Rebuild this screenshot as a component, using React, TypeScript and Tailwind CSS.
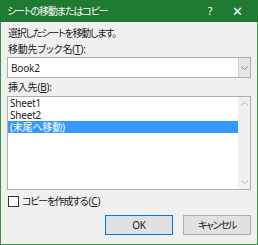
import React from 'react';

const font = {
  fontFamily: '"Noto Sans", "Noto Sans CJK JP", sans-serif',
  fontFeatureSettings: '"palt"',
};

function Chevron({ dir, className }: { dir: 'up' | 'down'; className?: string }) {
  return (
    <svg width="9" height="6" viewBox="0 0 9 6" className={className}>
      <path
        d={dir === 'down' ? 'M1 1.5 L4.5 4.5 L8 1.5' : 'M1 4.5 L4.5 1.5 L8 4.5'}
        fill="none"
        stroke="currentColor"
        strokeWidth="1"
      />
    </svg>
  );
}

export default function App() {
  const sheets = ['Sheet1', 'Sheet2', '(末尾へ移動)'];

  return (
    <div
      className="w-[258px] h-[245px] flex flex-col bg-[#f0f0f0] text-[10px] text-[#1a1a1a] tracking-[-0.2px]"
      style={font}
    >
      {/* Title bar */}
      <div className="h-[22px] flex items-center bg-[#217a33] text-white shrink-0">
        <span className="pl-[7px] flex-1 leading-[14px] tracking-[-1.1px]">シートの移動またはコピー</span>
        <span className="w-[20px] text-center text-[11px]">?</span>
        <span className="w-[38px] text-center text-[13px] leading-none pr-[4px]">✕</span>
      </div>

      {/* Body */}
      <div className="flex-1 flex flex-col px-[6px] pt-[4px] border-x border-b border-[#3f8f4c]">
        <div className="leading-[15px] pl-[1px] tracking-[-1.2px]">選択したシートを移動します。</div>
        <div className="leading-[16px] pl-[1px]">
          移動先ブック名(<span className="underline">T</span>):
        </div>

        {/* Combo box */}
        <div className="h-[21px] flex items-center bg-white border border-[#adadad]">
          <span className="flex-1 pl-[3px] leading-[14px]">Book2</span>
          <div className="w-[12px] h-[19px] flex items-center justify-center bg-[#e5e5e5] border-l border-[#cfcfcf] text-[#8a8a8a]">
            <Chevron dir="down" />
          </div>
        </div>

        <div className="leading-[16px] pl-[1px] mt-[1px]">
          挿入先(<span className="underline">B</span>):
        </div>

        {/* List box */}
        <div className="h-[94px] mt-[1px] flex bg-white border border-[#adadad]">
          <div className="flex-1 flex flex-col">
            {sheets.map((s, i) => (
              <div
                key={s}
                className={
                  'h-[12px] leading-[12px] pl-[2px] ' +
                  (i === 2 ? 'bg-[#3399ff] text-white' : '')
                }
              >
                {s}
              </div>
            ))}
          </div>
          <div className="w-[12px] flex flex-col items-center justify-between bg-[#f0f0f0] text-[#b5b5b5] py-[4px]">
            <Chevron dir="up" />
            <Chevron dir="down" />
          </div>
        </div>

        {/* Checkbox */}
        <div className="flex items-center gap-[3px] mt-[4px] pl-[1px]">
          <div className="w-[11px] h-[11px] bg-white border border-[#333333]" />
          <span className="leading-[15px]">
            <span className="tracking-[-1.3px]">コピーを作成する</span>
            <span className="pl-[1px]">
              (<span className="underline">C</span>)
            </span>
          </span>
        </div>

        {/* Buttons */}
        <div className="flex justify-end gap-[10px] mt-[6px]">
          <button className="w-[68px] h-[20px] bg-[#e1e1e1] border border-[#0078d7] leading-[14px]">
            OK
          </button>
          <button className="w-[68px] h-[20px] bg-[#e1e1e1] border border-[#adadad] leading-[14px] tracking-[-1.5px]">
            キャンセル
          </button>
        </div>
      </div>
    </div>
  );
}
